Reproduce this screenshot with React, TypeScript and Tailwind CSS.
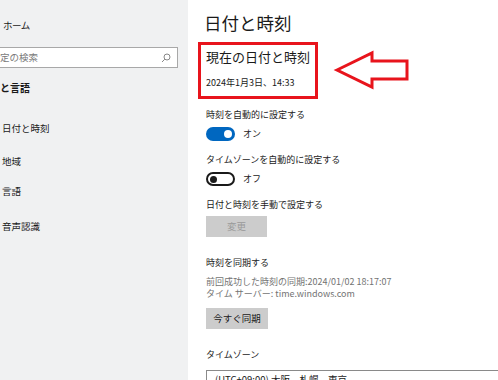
import React from "react";

const font = { fontFamily: '"Noto Sans CJK JP", "Noto Sans", sans-serif' };

function Toggle({ on }: { on: boolean }) {
  return on ? (
    <div className="w-[29px] h-[14px] rounded-full bg-[#0067c0] flex items-center justify-end pr-[3px]">
      <div className="w-[8px] h-[8px] rounded-full bg-white" />
    </div>
  ) : (
    <div className="w-[29px] h-[14px] rounded-full border-[2px] border-[#1a1a1a] flex items-center pl-[2px]">
      <div className="w-[7px] h-[7px] rounded-full bg-[#1a1a1a]" />
    </div>
  );
}

export default function App() {
  return (
    <div className="w-[498px] h-[380px] overflow-hidden flex bg-white text-[#1a1a1a] relative" style={font}>
      {/* Sidebar */}
      <div className="w-[188px] h-full bg-[#f0f1f2] flex flex-col text-[9.5px] shrink-0 [&>*]:shrink-0">
        <div className="h-[18px] mt-[16px] flex items-center pl-[3px] tracking-[-0.5px]">ホーム</div>
        <div className="h-[21px] mt-[13px] w-[178px] bg-white border border-l-0 border-[#a8a8a8] flex items-center justify-between pr-[6px] text-[#7a7a7a]">
          <span>定の検索</span>
          <svg width="10" height="10" viewBox="0 0 10 10" fill="none" stroke="#888" strokeWidth="1">
            <circle cx="6" cy="4" r="3" />
            <path d="M3.8 6.2 L1 9" />
          </svg>
        </div>
        <div className="h-[18px] mt-[10px] flex items-center font-bold text-[10px]">と言語</div>
        <div className="h-[18px] mt-[23px] flex items-center pl-[2px]">日付と時刻</div>
        <div className="h-[18px] mt-[15px] flex items-center pl-[2px]">地域</div>
        <div className="h-[18px] mt-[12px] flex items-center pl-[2px]">言語</div>
        <div className="h-[18px] mt-[17px] flex items-center pl-[2px]">音声認識</div>
      </div>

      {/* Main */}
      <div className="flex-1 flex flex-col pl-[18px] text-[9px] [&>*]:shrink-0">
        <div className="h-[26px] mt-[10px] flex items-center text-[17.5px] -ml-[2px]">日付と時刻</div>
        <div className="mt-[6px] -ml-[8px] w-[120px] h-[57px] border-[3px] border-[#e8141c] flex flex-col pl-[5px]">
          <div className="h-[24px] flex items-center text-[13px]">現在の日付と時刻</div>
          <div className="h-[20px] mt-[4px] flex items-center text-[9px]">2024年1月3日、14:33</div>
        </div>
        <div className="h-[18px] mt-[7px] flex items-center">時刻を自動的に設定する</div>
        <div className="h-[18px] mt-[1px] flex items-center gap-[8px]">
          <Toggle on />
          <span>オン</span>
        </div>
        <div className="h-[18px] mt-[8px] flex items-center">タイムゾーンを自動的に設定する</div>
        <div className="h-[18px] mt-[1px] flex items-center gap-[8px]">
          <Toggle on={false} />
          <span>オフ</span>
        </div>
        <div className="h-[18px] mt-[8px] flex items-center">日付と時刻を手動で設定する</div>
        <div className="h-[21px] w-[61px] mt-[2px] bg-[#cccccc] text-[#9a9a9a] flex items-center justify-center text-[9.5px]">変更</div>
        <div className="h-[18px] mt-[17px] flex items-center">時刻を同期する</div>
        <div className="h-[12px] leading-[12px] mt-[4px] flex items-center text-[#737373]">前回成功した時刻の同期:2024/01/02 18:17:07</div>
        <div className="h-[12px] leading-[12px] flex items-center text-[#737373]">タイム サーバー: time.windows.com</div>
        <div className="h-[21px] w-[62px] mt-[8px] bg-[#cccccc] flex items-center justify-center text-[9.5px]">今すぐ同期</div>
        <div className="h-[18px] mt-[17px] flex items-center">タイムゾーン</div>
        <div className="h-[30px] mt-[6px] w-[320px] border border-[#8a8a8a] flex items-start pt-[1px] pl-[8px] text-[9.5px]">
          (UTC+09:00) 大阪、札幌、東京
        </div>
      </div>

      {/* Arrow overlay */}
      <svg className="absolute left-0 top-0" width="498" height="380" viewBox="0 0 498 380">
        <polygon
          points="337,70 372,53 372,61 407,61 407,79 372,79 372,87"
          fill="white"
          stroke="#e8141c"
          strokeWidth="3"
          strokeLinejoin="miter"
        />
      </svg>
    </div>
  );
}
